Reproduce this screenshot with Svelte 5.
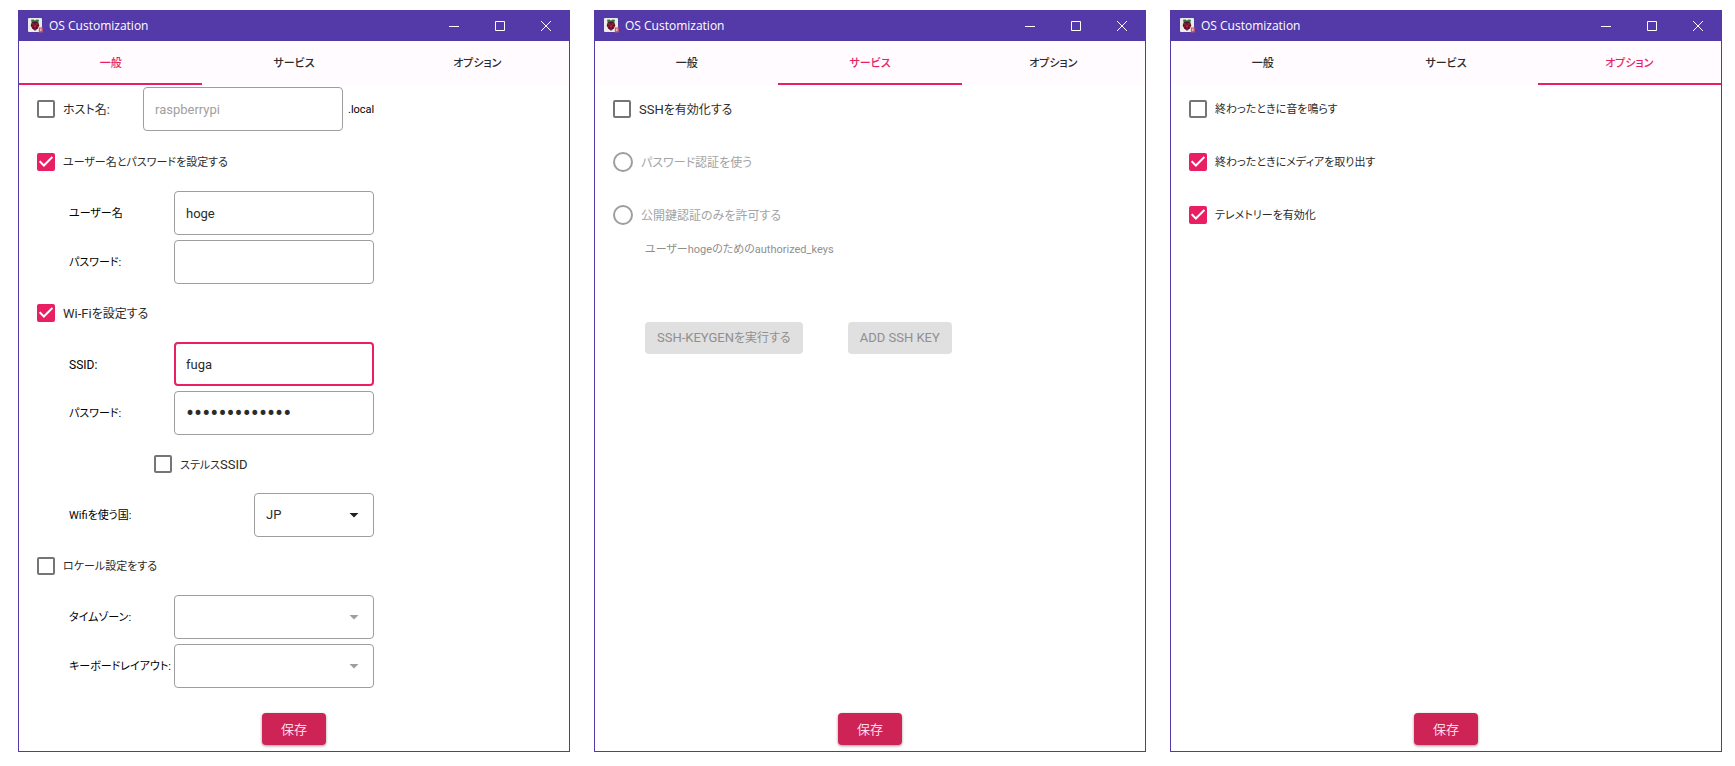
<script>
  const tabs = ['一般', 'サービス', 'オプション'];
</script>

{#snippet appIcon()}
  <svg class="app-icon" viewBox="0 0 15 15" aria-hidden="true">
    <rect width="14" height="14" rx="1" fill="#ececec" />
    <path d="M3 1.8 5.4 1.4 7 2.6 8.6 1.4 11 1.8 10.4 4.4 7 5.2 3.6 4.4Z" fill="#2f7a35" />
    <path d="M3.6 4.6 5.2 3.8H8.8L10.4 4.6 11.2 7.4 9.8 10.6 7 12.8 4.2 10.6 2.8 7.4Z" fill="#4d1024" />
    <circle cx="5.2" cy="6" r="1.2" fill="#9c1f42" />
    <circle cx="8.8" cy="6" r="1.2" fill="#9c1f42" />
    <circle cx="7" cy="8.2" r="1.4" fill="#ad2349" />
    <circle cx="4.5" cy="8.6" r=".9" fill="#8c1c3c" />
    <circle cx="9.5" cy="8.6" r=".9" fill="#8c1c3c" />
    <circle cx="7" cy="11" r="1" fill="#8c1c3c" />
    <rect x="10.8" y="9.4" width="4" height="5" fill="#cf5a68" />
    <path d="M12.2 10.6h1.2v2.4h-1.2z" fill="#f5c9ce" />
  </svg>
{/snippet}

{#snippet dialog(active, body)}
  <section class="window">
    <header class="titlebar">
      {@render appIcon()}
      <h1>OS Customization</h1>
      <button class="caption" aria-label="Minimize">
        <svg viewBox="0 0 10 10"><path d="M0 5.5h10" /></svg>
      </button>
      <button class="caption" aria-label="Maximize">
        <svg viewBox="0 0 10 10"><path d="M.5.5h9v9h-9z" /></svg>
      </button>
      <button class="caption" aria-label="Close">
        <svg viewBox="0 0 10 10"><path d="M0 0 10 10M10 0 0 10" /></svg>
      </button>
    </header>
    <nav class="tabs">
      {#each tabs as tab, i}
        <button class="tab" class:active={i === active}>{tab}</button>
      {/each}
    </nav>
    <div class="panel">
      {@render body()}
    </div>
    <footer>
      <button class="save">保存</button>
    </footer>
  </section>
{/snippet}

{#snippet general()}
  <div class="check-row host">
    <label class="check"><input type="checkbox" /><span class="text">ホスト名:</span></label>
    <input class="field" type="text" placeholder="raspberrypi" aria-labelledby="suffix" />
    <span class="suffix" id="suffix">.local</span>
  </div>

  <div class="check-row">
    <label class="check"><input type="checkbox" checked /><span class="text kana">ユーザー名とパスワードを設定する</span></label>
  </div>
  <div class="field-row">
    <label for="user">ユーザー名</label>
    <input class="field" id="user" type="text" value="hoge" />
  </div>
  <div class="field-row">
    <label for="user-pass">パスワード:</label>
    <input class="field" id="user-pass" type="password" />
  </div>

  <div class="check-row">
    <label class="check"><input type="checkbox" checked /><span class="text"><span class="latin">Wi-Fi</span>を設定する</span></label>
  </div>
  <div class="field-row">
    <label for="ssid"><span class="code">SSID:</span></label>
    <input class="field current" id="ssid" type="text" value="fuga" />
  </div>
  <div class="field-row">
    <label for="wifi-pass">パスワード:</label>
    <input class="field" id="wifi-pass" type="password" value="0123456789abc" />
  </div>
  <div class="check-row stealth">
    <label class="check"><input type="checkbox" /><span class="text kana">ステルス<span class="latin">SSID</span></span></label>
  </div>
  <div class="field-row">
    <label for="country">Wifiを使う国:</label>
    <div class="select short">
      <select class="field" id="country"><option>JP</option></select>
    </div>
  </div>

  <div class="check-row">
    <label class="check"><input type="checkbox" /><span class="text kana">ロケール設定をする</span></label>
  </div>
  <div class="field-row">
    <label for="timezone">タイムゾーン:</label>
    <div class="select off">
      <select class="field" id="timezone" disabled><option></option></select>
    </div>
  </div>
  <div class="field-row">
    <label for="keyboard">キーボードレイアウト:</label>
    <div class="select off">
      <select class="field" id="keyboard" disabled><option></option></select>
    </div>
  </div>
{/snippet}

{#snippet services()}
  <div class="check-row">
    <label class="check"><input type="checkbox" /><span class="text"><span class="latin">SSH</span>を有効化する</span></label>
  </div>
  <div class="check-row">
    <label class="check off"><input type="radio" name="auth" disabled /><span class="text">パスワード認証を使う</span></label>
  </div>
  <div class="check-row">
    <label class="check off"><input type="radio" name="auth" disabled /><span class="text">公開鍵認証のみを許可する</span></label>
  </div>
  <div class="keys">
    <p>ユーザーhogeのためのauthorized_keys</p>
    <div class="actions">
      <button disabled><span class="latin">SSH-KEYGEN</span>を実行する</button>
      <button disabled><span class="latin">ADD SSH KEY</span></button>
    </div>
  </div>
{/snippet}

{#snippet options()}
  <div class="check-row">
    <label class="check"><input type="checkbox" /><span class="text kana">終わったときに音を鳴らす</span></label>
  </div>
  <div class="check-row">
    <label class="check"><input type="checkbox" checked /><span class="text kana">終わったときにメディアを取り出す</span></label>
  </div>
  <div class="check-row">
    <label class="check"><input type="checkbox" checked /><span class="text kana">テレメトリーを有効化</span></label>
  </div>
{/snippet}

<main lang="ja">
  {@render dialog(0, general)}
  {@render dialog(1, services)}
  {@render dialog(2, options)}
</main>

<style>
  :global(body) {
    margin: 0;
    background: #fff;
  }

  main {
    display: grid;
    grid-template-columns: repeat(3, minmax(0, 1fr));
    gap: 24px;
    padding: 10px 13px 14px 18px;
    font: 12px/18px Roboto, 'Noto Sans CJK JP', sans-serif;
    font-feature-settings: 'palt';
    color: #2b2b2b;
  }

  button,
  input,
  select {
    font: inherit;
    font-feature-settings: inherit;
    color: inherit;
    margin: 0;
    box-sizing: border-box;
  }

  button {
    border: 0;
    padding: 0;
    background: none;
  }

  .kana {
    font-size: 11px;
  }

  .latin {
    font-size: 13px;
  }

  .code {
    font-size: 12px;
  }

  .window {
    display: flex;
    flex-direction: column;
    border: 1px solid #533aa8;
    border-top: 0;
  }

  .titlebar {
    display: flex;
    align-items: center;
    height: 31px;
    padding-left: 9px;
    margin: 0 -1px;
    padding-right: 1px;
    background: #533aa8;
    color: #fff;
  }

  .titlebar h1 {
    flex: 1;
    margin: 0 0 0 6px;
    font: 12px/18px 'Open Sans', sans-serif;
  }

  .app-icon {
    width: 15px;
    height: 15px;
    margin-left: 1px;
  }

  .caption {
    display: grid;
    place-items: center;
    width: 46px;
    height: 31px;
  }

  .caption svg {
    width: 10px;
    height: 10px;
    fill: none;
    stroke: #fff;
  }

  .tabs {
    display: flex;
    background: #fffbff;
  }

  .tab {
    flex: 1;
    height: 44px;
    padding-top: 4px;
    border-bottom: 2px solid transparent;
    font-size: 11px;
    font-weight: 500;
  }

  .tab.active {
    color: #e91e63;
    border-color: #e91e63;
  }

  .panel {
    display: flex;
    flex-direction: column;
    gap: 5px;
    padding: 0 18px;
  }

  .check-row {
    display: flex;
    align-items: center;
    height: 48px;
  }

  .check {
    display: flex;
    align-items: center;
    gap: 8px;
  }

  .text {
    padding-top: 2px;
  }

  .check.off {
    color: #a3a3a3;
  }

  .host .check {
    width: 106px;
  }

  .host .field {
    width: 200px;
  }

  .suffix {
    margin-left: 5px;
    padding-top: 2px;
    font-size: 11px;
    color: #000;
  }

  .stealth {
    padding-left: 117px;
  }

  input[type='checkbox'] {
    appearance: none;
    width: 18px;
    height: 18px;
    border: 2px solid #757575;
    border-radius: 2px;
  }

  input[type='checkbox']:checked {
    border-color: #e91e63;
    background: #e91e63
      url("data:image/svg+xml,%3Csvg xmlns='http://www.w3.org/2000/svg' viewBox='0 0 14 14'%3E%3Cpath d='M.6 6.2 4.9 10.5 13.4 2' fill='none' stroke='white' stroke-width='2'/%3E%3C/svg%3E")
      center / 14px no-repeat;
  }

  input[type='radio'] {
    appearance: none;
    width: 20px;
    height: 20px;
    border: 2px solid #9e9e9e;
    border-radius: 50%;
  }

  .field-row {
    display: flex;
    align-items: center;
    justify-content: space-between;
    width: 305px;
    padding-left: 32px;
    color: #000;
  }

  .field-row label {
    padding-top: 2px;
    font-size: 11px;
    white-space: nowrap;
  }

  .field {
    width: 200px;
    height: 44px;
    padding: 0 11px;
    border: 1px solid #9e9e9e;
    border-radius: 4px;
    background: #fff;
    font-size: 13px;
    color: #2b2b2b;
    outline: none;
  }

  .field[type='password'] {
    font-size: 24px;
  }

  .field::placeholder {
    color: #a0a0a0;
  }

  .field.current {
    border: 2px solid #e91e63;
    padding: 0 10px;
  }

  .select {
    display: grid;
    align-items: center;
  }

  .select .field {
    grid-area: 1 / 1;
    width: 200px;
    appearance: none;
    opacity: 1;
  }

  .select.short .field {
    width: 120px;
  }

  .select::after {
    content: '';
    grid-area: 1 / 1;
    justify-self: end;
    width: 10px;
    height: 5px;
    margin-right: 15px;
    background: #212121;
    clip-path: polygon(0 0, 100% 0, 50% 100%);
    pointer-events: none;
    z-index: 1;
  }

  .select.off::after {
    background: #9e9e9e;
  }

  .keys {
    padding-left: 32px;
    color: #8f8f8f;
  }

  .keys p {
    margin: 0 0 66px;
    font-size: 11px;
    line-height: 12px;
  }

  .actions {
    display: flex;
    gap: 45px;
  }

  .actions button {
    height: 32px;
    padding: 0 12px;
    border-radius: 4px;
    background: #e0e0e0;
    color: #8f8f8f;
  }

  footer {
    display: flex;
    justify-content: center;
    margin-top: auto;
    padding: 25px 0 6px;
  }

  .save {
    width: 64px;
    height: 32px;
    padding-top: 2px;
    border-radius: 4px;
    background: #cd2355;
    color: #fbdde6;
    font-size: 13px;
    box-shadow: 0 1px 3px rgba(0, 0, 0, 0.4);
  }
</style>
